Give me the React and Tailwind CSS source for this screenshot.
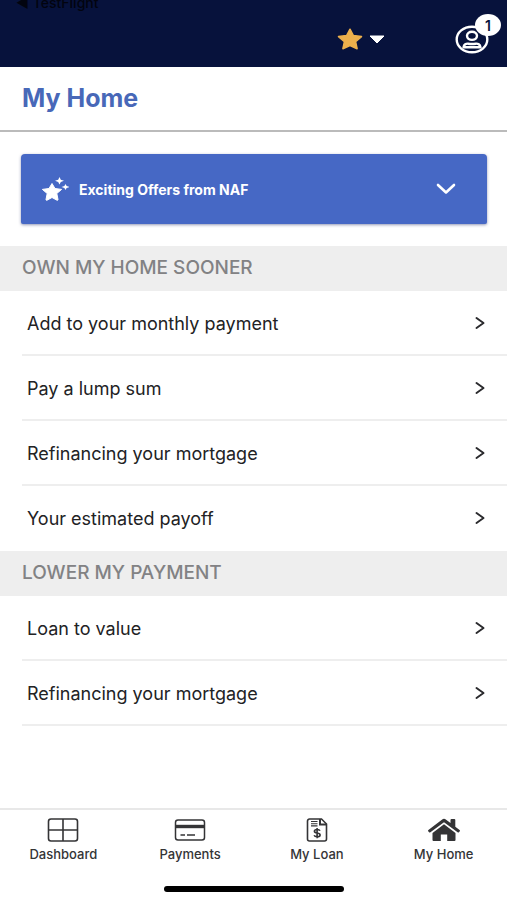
import React, { useState } from 'react';

const SECTIONS = [
  {
    title: 'OWN MY HOME SOONER',
    items: [
      'Add to your monthly payment',
      'Pay a lump sum',
      'Refinancing your mortgage',
      'Your estimated payoff',
    ],
  },
  {
    title: 'LOWER MY PAYMENT',
    items: ['Loan to value', 'Refinancing your mortgage'],
  },
];

const DashboardIcon = () => (
  <svg width="32" height="24" viewBox="0 0 32 24" fill="none" stroke="currentColor" strokeWidth="1.6" aria-hidden="true">
    <rect x="1.5" y="1" width="29" height="22" rx="2.5" />
    <path d="M16 1v22M1.5 12h29" />
  </svg>
);

const PaymentsIcon = () => (
  <svg width="32" height="24" viewBox="0 0 32 24" fill="none" stroke="currentColor" strokeWidth="1.5" aria-hidden="true">
    <rect x="1.5" y="2" width="29" height="20" rx="2.5" />
    <path d="M1.5 8.5h29" strokeWidth="3.4" />
    <path d="M6.5 17h4.500M13 17h8" />
  </svg>
);

const LoanIcon = () => (
  <svg width="22" height="24" viewBox="0 0 22 24" fill="none" stroke="currentColor" strokeWidth="1.6" aria-hidden="true">
    <path d="M3.5 1h12l5 5v15a2 2 0 0 1-2 2h-15a2 2 0 0 1-2-2V3a2 2 0 0 1 2-2z" />
    <path d="M14 1v5.500h6.500" strokeWidth="2" />
    <path d="M5 3.500h6.500M5 5.700h6.500M5 7.900h6.500" strokeWidth="1.1" />
    <path d="M14 12.800c-.4-.9-1.500-1.300-2.900-1.300-1.600 0-2.700.6-2.700 1.700 0 2.600 5.700 1.100 5.700 3.700 0 1.200-1.200 1.800-2.900 1.800-1.600 0-2.700-.5-3.100-1.500M11.100 10v10.300" />
  </svg>
);

const HomeIcon = () => (
  <svg width="34" height="24" viewBox="0 0 34 24" fill="currentColor" aria-hidden="true">
    <path d="M17 6.300 28.500 15v7a1 1 0 0 1-1 1h-7.300v-6.500h-6.400V23H6.500a1 1 0 0 1-1-1v-7z" />
    <path d="M17 .8c.7 0 1.300.2 1.800.6l4.700 3.500V2a1 1 0 0 1 1-1h2.800a1 1 0 0 1 1 1v6.700l4.300 3.300c.5.400.5.800.2 1.200l-.9 1c-.3.400-.8.400-1.300.1L17 4.300 3.400 14.300c-.5.300-1 .3-1.300-.1l-.9-1c-.3-.4-.3-.8.2-1.200L15.200 1.400c.5-.4 1.100-.6 1.800-.6z" />
  </svg>
);

const TABS = [
  { label: 'Dashboard', Icon: DashboardIcon },
  { label: 'Payments', Icon: PaymentsIcon },
  { label: 'My Loan', Icon: LoanIcon },
  { label: 'My Home', Icon: HomeIcon },
];

const TopBar = () => (
  <header className="h-[67px] shrink-0 overflow-hidden bg-[#07123c]">
    <p className="pl-4 text-[14px] leading-[6px] font-medium text-[#02040f]">◀ TestFlight</p>
    <div className="flex items-center justify-end gap-[70px] pt-1 pr-[18px]">
      <button type="button" aria-label="Favorites" className="mt-[10px] flex items-center gap-[6px]">
        <svg width="26" height="22" viewBox="0 0 26 22" fill="#edb04c" stroke="#edb04c" strokeWidth="1.5" strokeLinejoin="round" aria-hidden="true">
          <path d="M13 1.200l3.400 6.300 8.100 1.100-5.900 5 1.500 7.100L13 17.500l-7.100 3.200 1.500-7.100-5.900-5 8.100-1.100z" />
        </svg>
        <svg width="16" height="9" viewBox="0 0 16 9" fill="#fff" stroke="#fff" strokeWidth="1" strokeLinejoin="round" aria-hidden="true">
          <path d="M1 1h14L8 8z" />
        </svg>
      </button>
      <button type="button" aria-label="Profile, 1 notification" className="relative mt-[10px] h-[38px] w-[34px]">
        <svg width="34" height="29" viewBox="0 0 34 29" fill="none" stroke="#fff" strokeWidth="2.4" aria-hidden="true">
          <ellipse cx="17" cy="14.5" rx="15.3" ry="12.8" />
          <ellipse cx="17" cy="10.8" rx="5" ry="4.1" />
          <path d="M8.500 22.300c.4-2.800 2.700-3.900 4.700-3.600 2.500.4 5.100.4 7.600 0 2-.3 4.300.8 4.700 3.600z" strokeLinejoin="round" />
        </svg>
        <span className="absolute -top-[6px] -right-[12px] flex h-[22px] w-[26px] items-center justify-center rounded-[50%] bg-white text-[14px] font-semibold text-[#07123c]">
          1
        </span>
      </button>
    </div>
  </header>
);

const OffersCard = () => {
  const [open, setOpen] = useState(false);

  return (
    <button
      type="button"
      aria-expanded={open}
      onClick={() => setOpen(!open)}
      className="flex h-[70px] w-full items-center rounded-t-[4px] rounded-b-[2px] bg-[#4668c5] pr-[31px] pl-5 text-white shadow-[0_1px_3px_rgba(40,50,110,0.5)]"
    >
      <svg width="28" height="24" viewBox="0 0 28 24" fill="#fff" aria-hidden="true">
        <path d="M11 6.500l3 5 6.600.9-4.800 4.100 1.200 6c.1.700-.4 1-1 .7L11 20.500l-5 2.700c-.6.300-1.100 0-1-.7l1.200-6-4.800-4.100L8 11.500z" stroke="#fff" strokeWidth="1" strokeLinejoin="round" />
        <path d="M18.500 0l1.300 2.700 3.200 1.100-3.200 1.100-1.300 2.700-1.300-2.700L14 3.800l3.200-1.100zM24.500 7l1.100 2.100 2.900.9-2.900.9-1.100 2.100-1.100-2.100-2.900-.9 2.900-.9z" />
      </svg>
      <span className="ml-[10px] text-[14px] font-bold">Exciting Offers from NAF</span>
      <svg className="ml-auto" width="20" height="12" viewBox="0 0 20 12" fill="none" stroke="#fff" strokeWidth="2.6" strokeLinecap="round" strokeLinejoin="round" aria-hidden="true">
        <path d="M2 2l8 7.500L18 2" />
      </svg>
    </button>
  );
};

const Section = ({ title, items }) => (
  <section className="group">
    <h2 className="flex h-[45px] items-center bg-[#eeeeee] px-[22px] text-[19px] font-medium text-[#828284]">
      {title}
    </h2>
    <ul className="pl-[22px]">
      {items.map((item) => (
        <li key={item} className="border-b-2 border-[#eeeeee] group-first-of-type:last:border-transparent">
          <a href="#" className="flex h-[63px] items-center justify-between pt-px pr-[22px] pl-[5px] text-[18px] text-[#222224]">
            {item}
            <svg width="10" height="14" viewBox="0 0 10 14" fill="none" stroke="#2b2b2e" strokeWidth="2" strokeLinecap="round" strokeLinejoin="round" aria-hidden="true">
              <path d="M1.500 2L8.500 7l-7 5" />
            </svg>
          </a>
        </li>
      ))}
    </ul>
  </section>
);

const App = () => (
  <div className="flex min-h-dvh flex-col bg-white font-['Inter',sans-serif]">
    <TopBar />
    <h1 className="flex h-[65px] items-center border-b-2 border-[#bbbbbb] px-[22px] text-[25px] font-bold text-[#4868b8]">
      My Home
    </h1>
    <main>
      <div className="py-[22px] pr-5 pl-[21px]">
        <OffersCard />
      </div>
      {SECTIONS.map((section) => (
        <Section key={section.title} {...section} />
      ))}
    </main>
    <nav className="mt-auto border-t-2 border-[#e8e8e8]">
      <ul className="grid grid-cols-4">
        {TABS.map(({ label, Icon }) => (
          <li key={label}>
            <a href="#" className="flex flex-col items-center gap-[3px] pt-2 text-[13px] leading-[18px] font-medium text-[#343436]">
              <Icon />
              {label}
            </a>
          </li>
        ))}
      </ul>
      <div className="mx-auto mt-[23px] mb-2 h-[6px] w-[180px] rounded-full bg-black" />
    </nav>
  </div>
);

export default App;
